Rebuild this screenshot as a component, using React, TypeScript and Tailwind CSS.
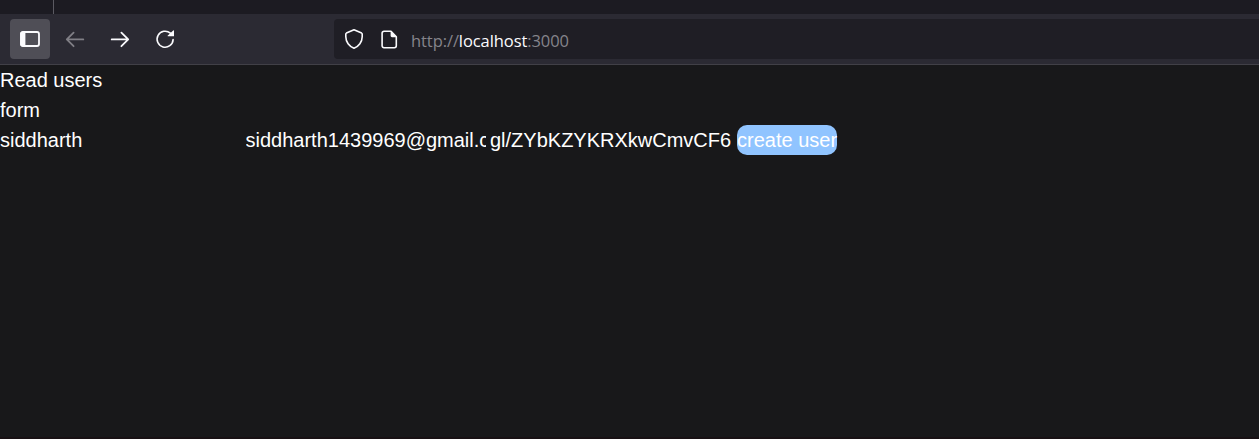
import React from "react";

function SidebarIcon() {
  return (
    <svg width="20" height="16" viewBox="0 0 20 16" fill="none">
      <rect x="1" y="1" width="18" height="14" rx="2" stroke="#fbfbfe" strokeWidth="1.8" />
      <path d="M2 0.5H5.4V15.5H2A2 2 0 0 1 .2 13.5V2.5A2 2 0 0 1 2 .5Z" fill="#fbfbfe" />
    </svg>
  );
}

function ArrowIcon({ back = false }: { back?: boolean }) {
  return (
    <svg
      width="20"
      height="20"
      viewBox="0 0 20 20"
      fill="none"
      stroke={back ? "#807f86" : "#fbfbfe"}
      strokeWidth="1.8"
      strokeLinecap="round"
      strokeLinejoin="round"
    >
      {back ? <path d="M18.3 10.4H2M8.6 3.6L1.8 10.4L8.6 17.2" /> : <path d="M1.7 10.4H18M11.4 3.6L18.2 10.4L11.4 17.2" />}
    </svg>
  );
}

function ReloadIcon() {
  return (
    <svg width="20" height="20" viewBox="0 0 20 20" fill="none">
      <path
        d="M18.1 10.6A8 8 0 1 1 15.4 4.2"
        stroke="#fbfbfe"
        strokeWidth="1.6"
        strokeLinecap="round"
      />
      <path d="M19 1.8V7.3H13.1C12.6 7.3 12.4 6.8 12.8 6.4L18.2 1.4C18.5 1.1 19 1.3 19 1.8Z" fill="#fbfbfe" />
    </svg>
  );
}

function ShieldIcon() {
  return (
    <svg width="20" height="20" viewBox="0 0 20 20" fill="none" stroke="#fbfbfe" strokeWidth="1.6" strokeLinejoin="round">
      <path d="M10 .8L17.6 4.1Q18.2 4.4 18.2 5V7.8C18.2 12.8 14.8 17.4 10 19.2C5.2 17.4 1.8 12.8 1.8 7.8V5Q1.8 4.4 2.4 4.1Z" />
    </svg>
  );
}

function PageIcon() {
  return (
    <svg width="17" height="19" viewBox="0 0 17 19" fill="none">
      <path
        d="M10 1.3H3A1.9 1.9 0 0 0 1.1 3.2V15.8A1.9 1.9 0 0 0 3 17.7H13.4A1.9 1.9 0 0 0 15.3 15.8V6.8Z"
        stroke="#fbfbfe"
        strokeWidth="1.6"
        strokeLinejoin="round"
      />
      <path d="M9.6 1L15.9 7.2H11A1.4 1.4 0 0 1 9.6 5.8Z" fill="#fbfbfe" />
    </svg>
  );
}

const toolButton = "flex h-10 w-10 items-center justify-center rounded";

export default function App() {
  return (
    <div className="flex h-[439px] w-full flex-col overflow-hidden bg-[#18181a] font-['Liberation_Sans',sans-serif]">
      <div className="h-3.5 shrink-0 bg-[#1c1b22]">
        <div className="h-full w-[54px] border-r border-[#5b5a62]" />
      </div>
      <header className="flex h-[51px] shrink-0 items-center border-b border-[#414047] bg-[#2b2a33] pl-2.5">
        <div className="flex w-[324px] shrink-0 gap-[5px]">
          <button aria-label="Sidebar" className="flex h-10 w-10 items-center justify-center rounded bg-[#4f4e56]">
            <SidebarIcon />
          </button>
          <button aria-label="Back" className={toolButton}>
            <ArrowIcon back />
          </button>
          <button aria-label="Forward" className={toolButton}>
            <ArrowIcon />
          </button>
          <button aria-label="Reload" className={toolButton}>
            <ReloadIcon />
          </button>
        </div>
        <div className="flex h-10 flex-1 items-center rounded-l bg-[#1f1e25] pl-2.5">
          <ShieldIcon />
          <div className="ml-[17px]">
            <PageIcon />
          </div>
          <div className="ml-[13px] pt-[3px] font-['Open_Sans',sans-serif] text-[16.5px] leading-6 tracking-[-0.08px] whitespace-nowrap text-[#85848b]">
            http://<span className="text-[#fbfbfe]">localhost</span>:3000
          </div>
        </div>
      </header>
      <main className="flex-1 text-xl leading-[30px] text-white">
        <h1>Read users</h1>
        <h2>form</h2>
        <form className="flex">
          <div className="mr-[5px] w-[240.5px] overflow-hidden whitespace-nowrap">siddharth</div>
          <div className="mr-[4px] w-[240.5px] overflow-hidden whitespace-nowrap">siddharth1439969@gmail.com</div>
          <div className="mr-[6px] w-[241px] overflow-hidden whitespace-nowrap">gl/ZYbKZYKRXkwCmvCF6</div>
          <button type="button" className="h-[30px] w-[100px] rounded-[10px] bg-[#90c4ff] whitespace-nowrap">
            create user
          </button>
        </form>
      </main>
      <div className="h-0.5 shrink-0 bg-[#181114]" />
    </div>
  );
}
